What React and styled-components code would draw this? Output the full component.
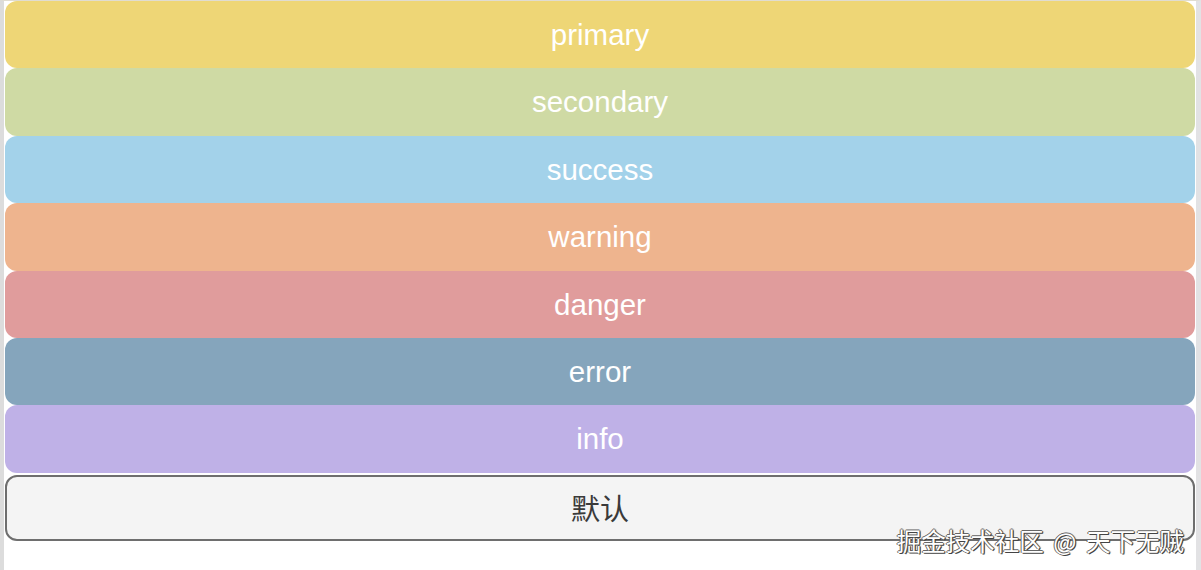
import styled, { createGlobalStyle } from 'styled-components'

const GlobalStyle = createGlobalStyle`
    html, body {
        margin: 0;
        padding: 0;
        background: #ffffff;
    }
    body {
        font-family: "Liberation Sans", Arial, "Noto Sans CJK SC", sans-serif;
    }
`

const colors = {
    primary: '#eed676',
    secondary: '#cfdaa4',
    success: '#a3d2ea',
    warning: '#eeb48e',
    danger: '#e09c9c',
    error: '#85a5bc',
    info: '#bfb1e7',
}

//Styling
const Frame = styled.div`
    position: relative;
    box-sizing: border-box;
    width: 1201px;
    height: 570px;
    border-left: 4px solid #dcdcdc;
    border-right: 5px solid #e2e2e4;
    border-top: 1px solid #e0dcd0;
    padding: 0 1px 0 1px;
    display: flex;
    flex-direction: column;
    overflow: hidden;
`

const Button = styled.button`
    box-sizing: border-box;
    width: 100%;
    height: 67.4px;
    flex: none;
    margin: 0;
    padding: 0;
    border: none;
    border-radius: 12px;
    background: ${props => colors[props.$type] || '#f4f4f4'};
    color: #ffffff;
    font-family: "Liberation Sans", Arial, "Noto Sans CJK SC", sans-serif;
    font-size: 29.5px;
    line-height: 1;
    display: flex;
    align-items: center;
    justify-content: center;
    cursor: pointer;
`

const DefaultButton = styled(Button)`
    height: 66px;
    margin-top: 2px;
    background: #f4f4f4;
    border: 2.5px solid #6e6e6e;
    color: #3a3a3a;
    font-family: "Noto Sans CJK SC", sans-serif;
    font-size: 29px;
`

const Watermark = styled.div`
    position: absolute;
    right: 12px;
    bottom: 17px;
    font-family: "Noto Sans CJK SC", sans-serif;
    font-size: 24.5px;
    line-height: 1;
    color: #ffffff;
    text-shadow: 1px 1px 0 #444, -1px 0 0 #666, 0 -1px 0 #666, 1px 0 1px #333;
    white-space: nowrap;
    word-spacing: 4px;
`

const types = ['primary', 'secondary', 'success', 'warning', 'danger', 'error', 'info']

const App = () => {
    return (
        <>
            <GlobalStyle />
            <Frame>
                {types.map(t => (
                    <Button key={t} $type={t}>{t}</Button>
                ))}
                <DefaultButton>默认</DefaultButton>
                <Watermark>掘金技术社区 @ 天下无贼</Watermark>
            </Frame>
        </>
    );
}

export default App;
